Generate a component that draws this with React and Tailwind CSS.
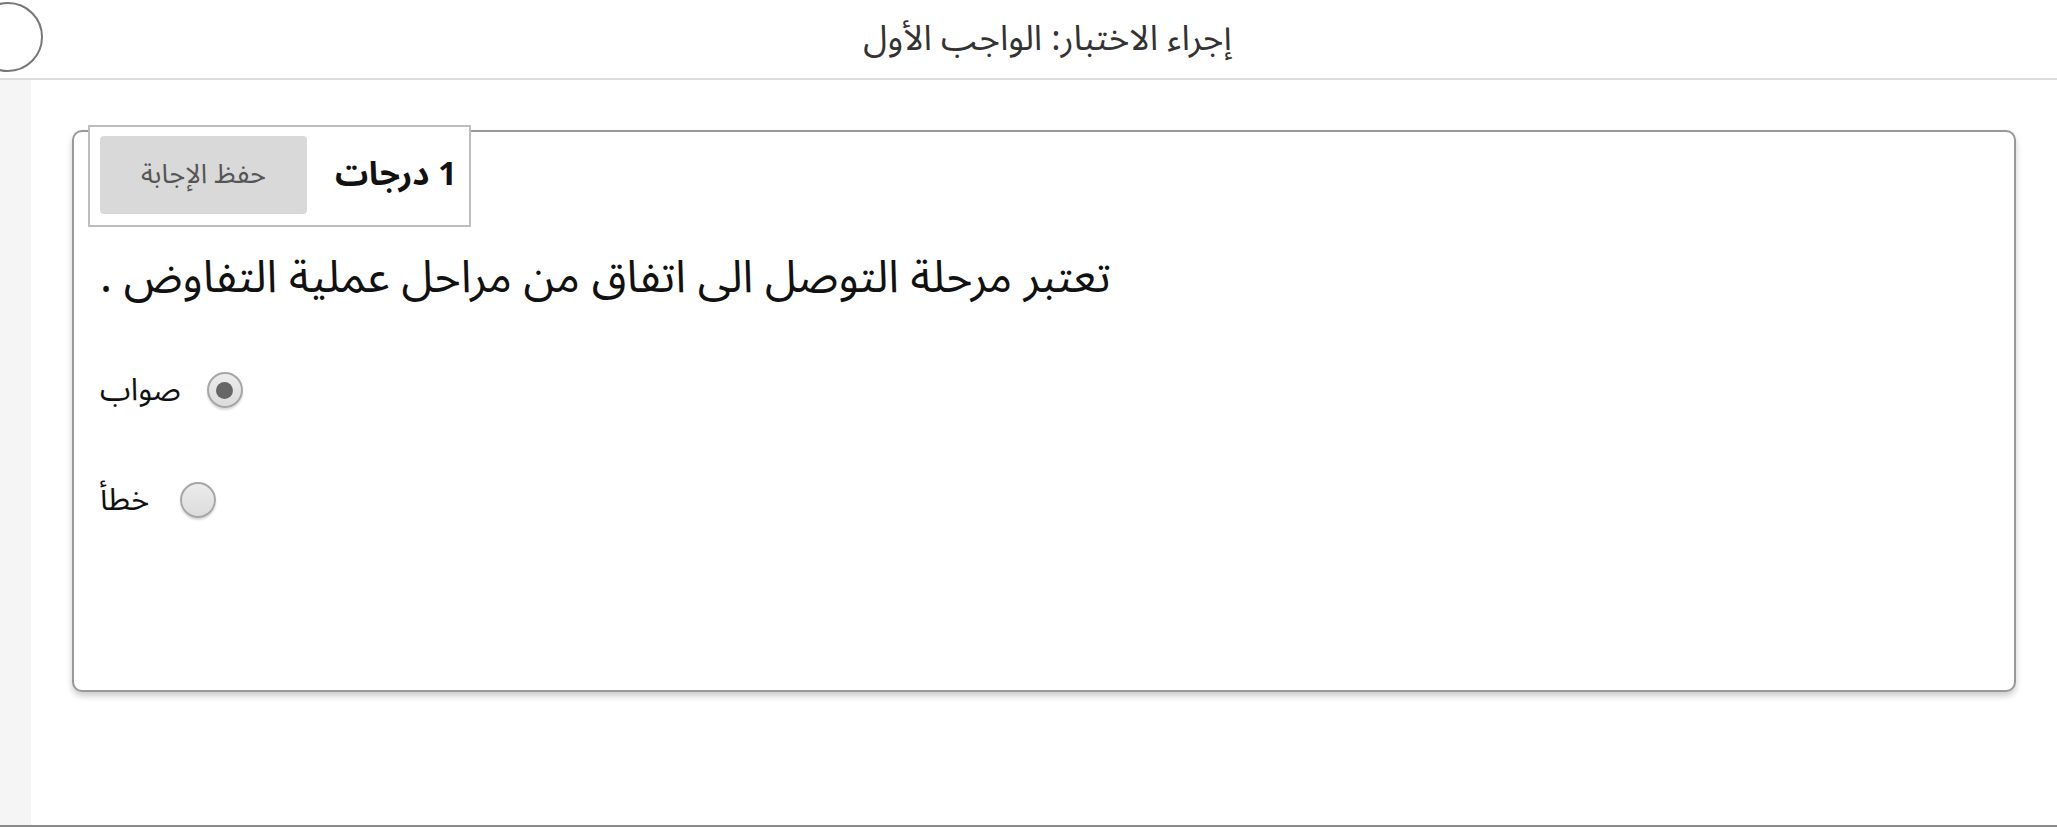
import React from "react";

const AR = { fontFamily: '"Noto Sans Arabic","DejaVu Sans",sans-serif' };

function Radio({ checked }) {
  return (
    <span className="relative flex h-[36px] w-[36px] items-center justify-center rounded-full border-2 border-[#a6a6a6] bg-gradient-to-b from-[#ececec] to-[#dcdcdc] shadow-[0_2px_2px_rgba(0,0,0,0.15)]">
      {checked && <span className="h-[17px] w-[17px] rounded-full bg-[#666]" />}
    </span>
  );
}

export default function App() {
  return (
    <div className="flex h-[827px] w-full flex-col bg-white" style={AR}>
      <header className="relative flex h-[80px] shrink-0 items-center justify-center border-b-2 border-[#dcdcdc] pl-[38px]">
        <div className="absolute left-[-27px] top-[2px] h-[70px] w-[70px] rounded-full border-2 border-[#777] bg-white" />
        <h1 dir="rtl" className="text-[35px] font-normal text-[#333]" style={AR}>
          إجراء الاختبار: الواجب الأول
        </h1>
      </header>
      <main className="flex flex-1 border-b-2 border-[#8a8a8a]">
        <div className="w-[31px] shrink-0 bg-[#f5f5f5]" />
        <div className="flex-1 bg-white pl-[41px] pr-[41px] pt-[50px]">
          <div className="h-[562px] rounded-[10px] border-2 border-[#999] bg-white shadow-[0_4px_6px_rgba(0,0,0,0.2)]">
            <div className="ml-[14px] -mt-[7px] flex w-fit items-center border-2 border-[#bdbdbd] bg-white pb-[11px] pl-[10px] pr-[12px] pt-[9px]">
              <button dir="rtl" className="flex h-[78px] w-[207px] items-center justify-center rounded-[4px] bg-[#d9d9d9] text-[27px] text-[#555]">
                حفظ الإجابة
              </button>
              <span dir="rtl" className="ml-[28px] text-[33px] font-bold text-[#111]">
                1 درجات
              </span>
            </div>
            <div className="pl-[26px] pt-[17px]">
              <p dir="rtl" className="w-fit text-[45px] leading-[68px] text-[#111]">
                تعتبر مرحلة التوصل الى اتفاق من مراحل عملية التفاوض .
              </p>
              <div className="mt-[55px] flex flex-col gap-[63px]">
                <label className="flex w-fit items-center gap-[26px]">
                  <span dir="rtl" className="text-[31px] text-[#111]">صواب</span>
                  <Radio checked />
                </label>
                <label className="flex w-fit items-center gap-[31px]">
                  <span dir="rtl" className="text-[31px] text-[#111]">خطأ</span>
                  <Radio />
                </label>
              </div>
            </div>
          </div>
        </div>
      </main>
    </div>
  );
}
